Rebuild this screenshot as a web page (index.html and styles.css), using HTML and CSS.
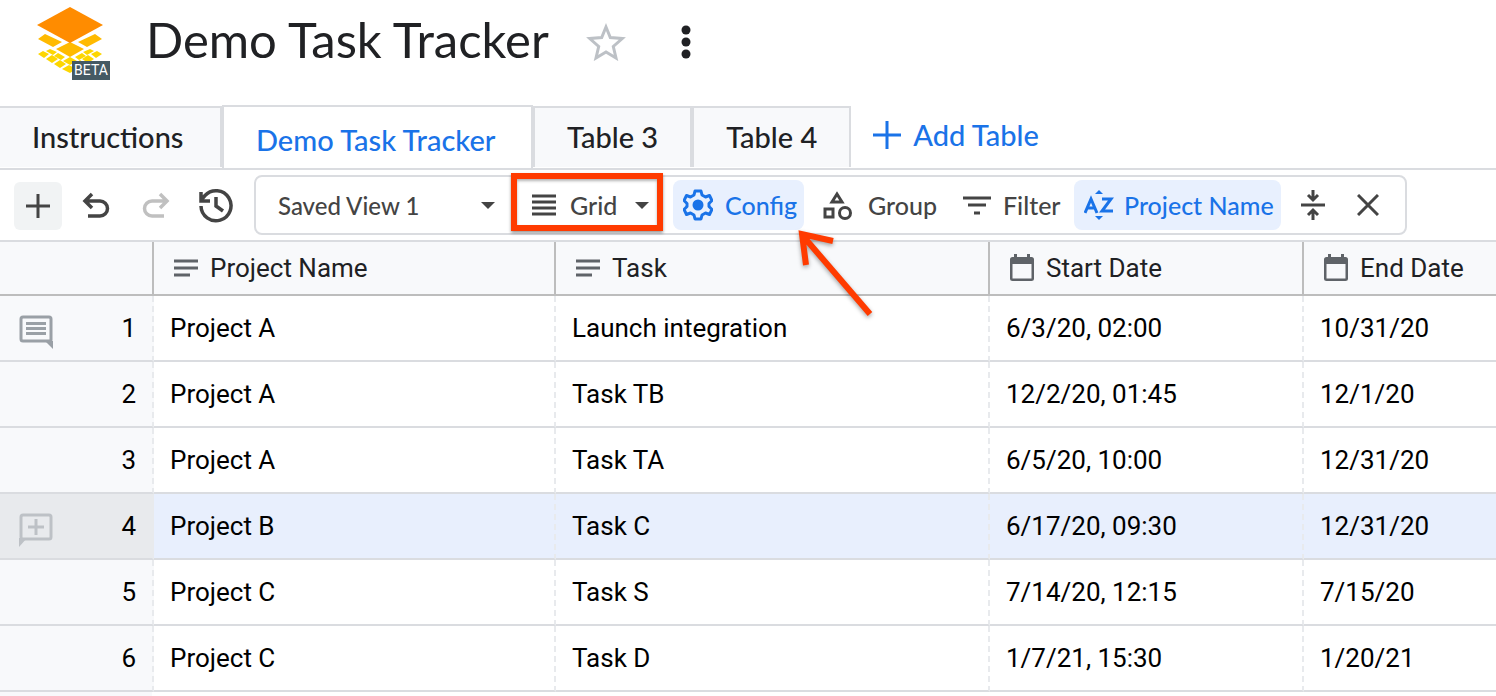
FILE: index.html
```html
<!DOCTYPE html>
<html lang="en">
<head>
    <meta charset="UTF-8">
    <meta name="viewport" content="width=device-width, initial-scale=1.0">
    <title>Demo Task Tracker</title>
    <link rel="stylesheet" href="styles.css">
</head>
<body>
    <header class="header">
        <a class="logo" href="#" aria-label="Home">
            <svg width="76" height="76" viewBox="36 6 76 76">
                <path fill="#fdd600" d="M38 54l5-3 6 3-5 4zM46 59l6-4 6 4-6 4zM54 64l6-4 6 4-6 4zM62 69l7-4 7 4-6 4zM46 51l4-2 7 3-4 3zM54 56l4-3 7 4-4 3zM63 61l7-4 7 4-7 4zM75 57l7-4 4 3-7 4zM83 52l7-3 4 2-7 4zM91 54l6-3 5 3-6 4zM82 59l6-4 6 4-6 4zM74 64l6-4 6 4-6 4z"/>
                <path fill="#ffba00" d="M38 39l7-5 17 8-9 5zM102 39l-7-5-17 8 9 5zM56 49l14-7 14 7-14 8z"/>
                <path fill="#ff8c00" d="M37 25L70 7l33 18-33 18z"/>
            </svg>
            <span class="beta">BETA</span>
        </a>
        <h1>Demo Task Tracker</h1>
        <button class="icon-btn star" aria-label="Star">
            <svg width="40" height="38" viewBox="0 0 40 38"><path fill="none" stroke="#bdc1c6" stroke-width="3" d="M20 4l4.300 10.500 12 1-9 8 2.700 11.500L20 29l-10 6 2.700-11.500-9-8 12-1z"/></svg>
        </button>
        <button class="icon-btn" aria-label="More">
            <svg width="10" height="34" viewBox="0 0 10 34" fill="#202124"><circle cx="5" cy="5" r="4.500"/><circle cx="5" cy="17" r="4.500"/><circle cx="5" cy="29" r="4.500"/></svg>
        </button>
    </header>

    <nav class="tabs">
        <a class="tab" href="#">Instructions</a>
        <a class="tab active" href="#">Demo Task Tracker</a>
        <a class="tab" href="#">Table 3</a>
        <a class="tab" href="#">Table 4</a>
        <button class="add-table">
            <svg width="28" height="28" viewBox="0 0 28 28"><path stroke="#1a73e8" stroke-width="3" d="M14 0v28M0 14h28"/></svg>
            Add Table
        </button>
    </nav>

    <div class="toolbar">
        <button class="tool add" aria-label="Add row">
            <svg width="24" height="24" viewBox="0 0 24 24"><path stroke="#444" stroke-width="3" d="M12 0v24M0 12h24"/></svg>
        </button>
        <button class="tool" aria-label="Undo">
            <svg width="28" height="28" viewBox="0 0 28 28"><path fill="none" stroke="#444" stroke-width="3.500" d="M10 2L3 9l7 7M3 9h15a7.500 7.500 0 0 1 0 15H6"/></svg>
        </button>
        <button class="tool" aria-label="Redo">
            <svg width="28" height="28" viewBox="0 0 28 28"><path fill="none" stroke="#c0c0c0" stroke-width="3.500" d="M18 2l7 7-7 7M25 9H10a7.500 7.500 0 0 0 0 15h12"/></svg>
        </button>
        <button class="tool" aria-label="History">
            <svg width="36" height="36" viewBox="0 0 36 36"><path fill="none" stroke="#444" stroke-width="3.500" d="M3 18a15 15 0 1 0 4-10.500L4 11M3 4v9h9M18 9v9l7 5"/></svg>
        </button>

        <div class="view-bar">
            <div class="saved">
                <select aria-label="Saved view"><option>Saved View 1</option></select>
            </div>
            <div class="layout">
                <svg width="24" height="22" viewBox="0 0 24 22"><path stroke="#444" stroke-width="3" d="M0 2h24M0 8h24M0 14h24M0 20h24"/></svg>
                <select aria-label="Layout"><option>Grid</option></select>
                <div class="highlight"></div>
            </div>
            <button class="action config on">
                <svg width="30" height="32" viewBox="0 0 30 32"><path fill="none" stroke="#1a73e8" stroke-width="3" stroke-linejoin="round" d="M12 2h6l1 4 3.500 2 4-1.500 2.500 5-3 3v3l3 3-2.500 5-4-1.500L19 26l-1 4h-6l-1-4-3.500-2-4 1.500-2.500-5 3-3v-3l-3-3 2.500-5 4 1.500L11 6z"/><circle cx="15" cy="16" r="5.500" fill="#1a73e8"/></svg>
                Config
                <svg class="arrow" width="80" height="96" viewBox="0 0 80 96"><path fill="none" stroke="#ff3b00" stroke-width="6" d="M73 84L6 6M36 11L5 4l4 31"/></svg>
            </button>
            <button class="action group">
                <svg width="30" height="30" viewBox="0 0 30 30"><path fill="none" stroke="#444" stroke-width="3" d="M15 4l-5 8h10zM3 19h8v8H3z"/><circle cx="23" cy="23" r="5.500" fill="none" stroke="#444" stroke-width="3"/></svg>
                Group
            </button>
            <button class="action filter">
                <svg width="28" height="20" viewBox="0 0 28 20"><path stroke="#444" stroke-width="3" d="M0 3h28M5 10h18M11 18h6"/></svg>
                Filter
            </button>
            <button class="action sort on">
                <svg width="30" height="30" viewBox="0 0 30 30"><path fill="#1a73e8" d="M15 0l4 4h-8zM15 30l4-4h-8z"/><path fill="none" stroke="#1a73e8" stroke-width="3" d="M1 23L7 9l6 14M4 18h6M18 9h9l-9 12h11"/></svg>
                Project Name
            </button>
            <button class="icon-btn collapse" aria-label="Row height">
                <svg width="24" height="32" viewBox="0 0 24 32"><path fill="none" stroke="#444" stroke-width="3" d="M0 16h24M12 1v10M7 6l5 5 5-5M12 31V21M7 26l5-5 5 5"/></svg>
            </button>
            <button class="icon-btn close" aria-label="Close">
                <svg width="22" height="22" viewBox="0 0 22 22"><path stroke="#444" stroke-width="3" d="M1 1l20 20M21 1L1 21"/></svg>
            </button>
        </div>
    </div>

    <table class="grid">
        <colgroup>
            <col class="c-num"><col class="c-project"><col class="c-task"><col class="c-start"><col>
        </colgroup>
        <thead>
            <tr>
                <th aria-label="Row"></th>
                <th><div class="head"><svg width="24" height="18" viewBox="0 0 24 18"><path stroke="#5f6368" stroke-width="3" d="M0 2h24M0 9h24M0 16h16"/></svg>Project Name</div></th>
                <th><div class="head"><svg width="24" height="18" viewBox="0 0 24 18"><path stroke="#5f6368" stroke-width="3" d="M0 2h24M0 9h24M0 16h16"/></svg>Task</div></th>
                <th><div class="head"><svg width="24" height="28" viewBox="0 0 24 28"><path fill="#5f6368" fill-rule="evenodd" d="M4 0h3v3h10V0h3v3h1.500Q24 3 24 5.500V25q0 2-2.500 2h-19Q0 27 0 25V5.500Q0 3 2.500 3H4zM2.500 10v14.500h19V10z"/></svg>Start Date</div></th>
                <th><div class="head"><svg width="24" height="28" viewBox="0 0 24 28"><path fill="#5f6368" fill-rule="evenodd" d="M4 0h3v3h10V0h3v3h1.500Q24 3 24 5.500V25q0 2-2.500 2h-19Q0 27 0 25V5.500Q0 3 2.500 3H4zM2.500 10v14.500h19V10z"/></svg>End Date</div></th>
            </tr>
        </thead>
        <tbody>
            <tr>
                <td class="num"><div class="row-head"><svg width="34" height="34" viewBox="0 0 34 34"><path fill="none" stroke="#9aa0a6" stroke-width="3" d="M4 2h26q2 0 2 2v21q0 1-2 1H4q-2 0-2-2V4q0-2 2-2z"/><path fill="#9aa0a6" d="M26 26h8v8zM7 7h20v3H7zM7 12h20v3H7zM7 17h20v3H7z"/></svg><span>1</span></div></td>
                <td>Project A</td><td>Launch integration</td><td>6/3/20, 02:00</td><td>10/31/20</td>
            </tr>
            <tr><td class="num">2</td><td>Project A</td><td>Task TB</td><td>12/2/20, 01:45</td><td>12/1/20</td></tr>
            <tr><td class="num">3</td><td>Project A</td><td>Task TA</td><td>6/5/20, 10:00</td><td>12/31/20</td></tr>
            <tr class="selected">
                <td class="num"><div class="row-head"><svg width="34" height="34" viewBox="0 0 34 34"><path fill="none" stroke="#bdc1c6" stroke-width="3" d="M4 2h26q2 0 2 2v20q0 2-2 2H4q-2 0-2-2V4q0-2 2-2zM17 6v16M9 14h16"/><path fill="#bdc1c6" d="M0 25h8l-8 9z"/></svg><span>4</span></div></td>
                <td>Project B</td><td>Task C</td><td>6/17/20, 09:30</td><td>12/31/20</td>
            </tr>
            <tr><td class="num">5</td><td>Project C</td><td>Task S</td><td>7/14/20, 12:15</td><td>7/15/20</td></tr>
            <tr><td class="num">6</td><td>Project C</td><td>Task D</td><td>1/7/21, 15:30</td><td>1/20/21</td></tr>
        </tbody>
    </table>
    <div class="grid-end"></div>
</body>
</html>
```
FILE: styles.css
```css
* {
    box-sizing: border-box;
}
body {
    margin: 0;
    font-family: Lato, sans-serif;
    background: white;
    color: #202124;
    overflow: hidden;
}
button, select {
    font: inherit;
    color: inherit;
    background: none;
    border: 0;
    padding: 0;
    cursor: pointer;
}
svg {
    display: block;
    flex: none;
}
.header {
    display: flex;
    align-items: center;
    height: 105px;
    padding: 0 36px 21px;
}
.logo {
    position: relative;
    width: 76px;
    margin: 4px 34px 0 0;
    text-decoration: none;
}
.beta {
    position: absolute;
    right: 2px;
    bottom: 2px;
    width: 38px;
    background: #455a64;
    color: white;
    font: 14px/19px Roboto, sans-serif;
    text-align: center;
}
h1 {
    margin: 0 0 6px;
    font-size: 49px;
    font-weight: 400;
    line-height: 60px;
}
.star {
    margin: 0 55px 0 37px;
}
.tabs {
    display: flex;
    border-bottom: 2px solid #dadce0;
    font-size: 29px;
    font-weight: 500;
}
.tab {
    height: 61px;
    margin: 1px 0;
    padding: 0 32px;
    border: 2px solid #dadce0;
    border-bottom: 0;
    background: #f8f9fb;
    color: #202124;
    line-height: 58px;
    text-decoration: none;
}
.tab:first-child {
    min-width: 222px;
    border-left: 0;
}
.tab.active {
    min-width: 311px;
    height: 63px;
    margin: 0;
    background: white;
    color: #1a73e8;
    line-height: 65px;
}
.add-table {
    display: flex;
    align-items: center;
    gap: 12px;
    margin-left: 22px;
    padding-bottom: 4px;
    color: #1a73e8;
}
.toolbar {
    display: flex;
    align-items: center;
    gap: 12px;
    padding: 5px 14px;
    border-bottom: 2px solid #dadce0;
    color: #444;
    font-size: 25px;
    font-weight: 500;
}
.tool {
    display: flex;
    align-items: center;
    justify-content: center;
    width: 48px;
    height: 48px;
    margin-top: 2px;
    border-radius: 6px;
}
.add {
    margin-right: -2px;
    background: #f1f3f4;
}
.view-bar {
    display: flex;
    align-items: center;
    height: 60px;
    margin-left: 2px;
    border: 2px solid #dadce0;
    border-radius: 8px;
}
.saved, .layout {
    position: relative;
    display: flex;
    align-items: center;
}
.saved::after, .layout::after {
    content: "";
    position: absolute;
    right: 14px;
    border: 7px solid transparent;
    border-top-color: #444;
    border-bottom: 0;
}
select {
    appearance: none;
    width: 100%;
    outline: 0;
}
.saved {
    width: 255px;
    padding-left: 22px;
    font-size: 24px;
}
.saved::after {
    right: 16px;
}
.layout {
    gap: 14px;
    width: 152px;
    padding-left: 21px;
}
.highlight {
    position: absolute;
    inset: -17px 0 -11px;
    border: 6px solid #ff3b00;
    box-shadow: 0 2px 3px rgba(0, 0, 0, 0.4), inset 0 2px 3px rgba(0, 0, 0, 0.3);
    pointer-events: none;
}
.action {
    position: relative;
    display: flex;
    align-items: center;
    height: 50px;
    padding: 0 10px;
    border-radius: 8px;
    white-space: nowrap;
}
.on {
    background: #e8f0fe;
    color: #1a73e8;
}
.config {
    gap: 12px;
    width: 131px;
    margin-left: 10px;
}
.group {
    gap: 16px;
    width: 141px;
    margin-left: 8px;
}
.filter {
    gap: 12px;
    width: 121px;
}
.sort {
    gap: 10px;
    width: 207px;
}
.collapse {
    margin: 0 32px 0 20px;
}
.close {
    margin-right: 26px;
}
.arrow {
    position: absolute;
    left: 124px;
    top: 50px;
    filter: drop-shadow(0 2px 2px rgba(0, 0, 0, 0.35));
    pointer-events: none;
}
.grid {
    width: 100%;
    table-layout: fixed;
    border-spacing: 0;
    font: 26px/32px Roboto, sans-serif;
}
.c-num {
    width: 154px;
}
.c-project {
    width: 402px;
}
.c-task {
    width: 434px;
}
.c-start {
    width: 314px;
}
th {
    height: 54px;
    padding: 0 20px;
    background: #f8f9fb;
    border-right: 2px solid #bdbdbd;
    border-bottom: 2px solid #bdbdbd;
    font-weight: 400;
}
.head {
    display: flex;
    align-items: center;
    gap: 12px;
    white-space: nowrap;
}
td {
    height: 66px;
    padding: 0 16px;
    border-right: 2px dashed #e8eaed;
    border-bottom: 2px solid #dadce0;
    color: black;
    white-space: nowrap;
}
th:last-child, td:last-child {
    border-right: 0;
}
.num {
    background: #f8f9fb;
    text-align: right;
}
.row-head {
    display: flex;
    align-items: center;
    justify-content: space-between;
    margin-left: 3px;
}
.row-head svg {
    margin: 7px 0 0;
}
.selected td {
    background: #e8effd;
}
.selected .num {
    background: #e8eaed;
}
.grid-end {
    width: 152px;
    height: 20px;
    background: #f8f9fb;
}
```
